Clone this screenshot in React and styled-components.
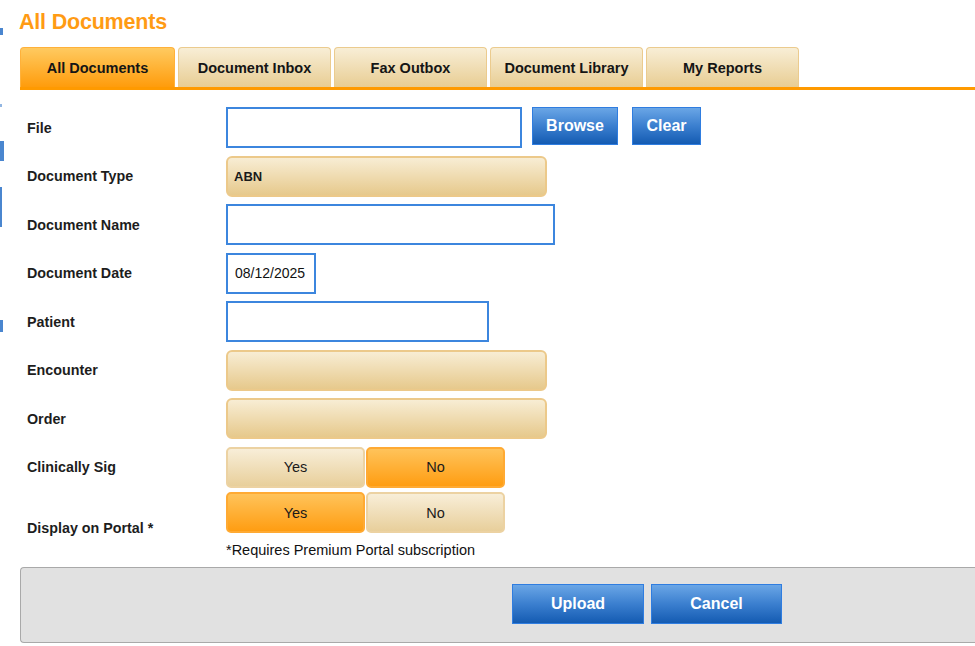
import React, { useState } from 'react';
import styled, { createGlobalStyle } from "styled-components";

const GlobalStyle = createGlobalStyle`
  body {
    margin: 0;
    background: #fff;
    font-family: "Liberation Sans", Arial, sans-serif;
    overflow: hidden;
  }
`;

const Page = styled.div`
  display: flex;
  width: 975px;
  height: 646px;
  overflow: hidden;
`;

const SideStrip = styled.div`
  width: 5px;
  display: flex;
  flex-direction: column;
  flex-shrink: 0;
`;

const Mark = styled.div`
  margin-top: ${p => p.$gap}px;
  height: ${p => p.$h}px;
  width: ${p => p.$w}px;
  background: #4a86cf;
  opacity: ${p => p.$o || 1};
`;

const Main = styled.div`
  flex: 1;
  padding-left: 15px;
  min-width: 0;
`;

const Title = styled.h1`
  margin: 0 0 0 -1px;
  padding-top: 10px;
  height: 36px;
  box-sizing: border-box;
  font-size: 21.5px;
  font-weight: bold;
  color: #ff9b14;
  letter-spacing: -0.2px;
`;

const TabBar = styled.div`
  display: flex;
  gap: 3px;
  margin-top: 11px;
  border-bottom: 3px solid #ff9a00;
`;

const Tab = styled.div`
  width: ${p => (p.$wide ? 155 : 153)}px;
  height: 40px;
  box-sizing: border-box;
  display: flex;
  align-items: center;
  justify-content: center;
  font-size: 14.5px;
  font-weight: bold;
  color: #151515;
  border: 1px solid ${p => (p.$active ? "#ffb13a" : "#ebcb8e")};
  border-bottom: none;
  border-radius: 4px 4px 0 0;
  background: ${p =>
    p.$active
      ? "linear-gradient(#ffca60, #ff9c0c)"
      : "linear-gradient(#f8eed6, #e8cd93)"};
  cursor: pointer;
`;

const Form = styled.div`
  display: grid;
  grid-template-columns: 199px 1fr;
  row-gap: 7.5px;
  padding: 17px 0 0 7px;
  align-items: center;
`;

const Label = styled.div`
  font-size: 14.3px;
  font-weight: bold;
  color: #1d1d1d;
  margin-top: ${p => p.$mt || 0}px;
`;

const Field = styled.div`
  display: flex;
  align-items: flex-start;
`;

const FieldStack = styled.div`
  display: flex;
  flex-direction: column;
  margin-top: -3px;
`;

const TextInput = styled.input`
  width: ${p => p.$w}px;
  height: 41px;
  box-sizing: border-box;
  border: 2px solid #3c86de;
  padding: 0 7px;
  font-family: "Liberation Sans", Arial, sans-serif;
  font-size: 14px;
  color: #111;
  outline: none;
`;

const Select = styled.div`
  width: 321px;
  height: 41px;
  box-sizing: border-box;
  border: 2px solid #ecc98a;
  border-radius: 6px;
  background: linear-gradient(#f8edd4, #e6c98c);
  padding: 0 6px;
  display: flex;
  align-items: center;
  font-size: 13px;
  font-weight: bold;
  color: #1a1a1a;
`;

const BlueButton = styled.button`
  width: ${p => p.$w}px;
  height: ${p => p.$h || 38}px;
  margin-left: ${p => p.$ml || 0}px;
  border: 1px solid #2f7de0;
  background: linear-gradient(#6aa6e6, #3b7fcf 50%, #145bb2);
  color: #fff;
  font-family: "Liberation Sans", Arial, sans-serif;
  font-size: 16px;
  font-weight: bold;
  cursor: pointer;
  padding: 0;
`;

const Toggle = styled.div`
  display: flex;
  gap: 1px;
`;

const ToggleButton = styled.button`
  width: 139px;
  height: 41px;
  box-sizing: border-box;
  border: 2px solid ${p => (p.$on ? "#ffaa33" : "#ecd2a2")};
  border-radius: 5px;
  background: ${p =>
    p.$on
      ? "linear-gradient(#ffc35a, #ff9d12)"
      : "linear-gradient(#f8eed8, #e8cf9b)"};
  font-family: "Liberation Sans", Arial, sans-serif;
  font-size: 14.5px;
  color: #1a1a1a;
  cursor: pointer;
  padding: 0;
`;

const Note = styled.div`
  font-size: 14.5px;
  color: #111;
  margin-top: 9px;
`;

const Footer = styled.div`
  margin-top: 9px;
  height: 76px;
  box-sizing: border-box;
  background: #e1e1e1;
  border: 1px solid #a9a9a9;
  border-right: none;
  border-radius: 4px 0 0 4px;
  display: flex;
  align-items: center;
  gap: 7px;
  padding: 0 0 2px 491px;
`;

const YesNo = ({ value, onChange }) => (
  <Toggle>
    <ToggleButton $on={value === "yes"} onClick={() => onChange("yes")}>Yes</ToggleButton>
    <ToggleButton $on={value === "no"} onClick={() => onChange("no")}>No</ToggleButton>
  </Toggle>
);

const tabs = ["All Documents", "Document Inbox", "Fax Outbox", "Document Library", "My Reports"];

const App = () => {
  const [activeTab, setActiveTab] = useState(0);
  const [clinical, setClinical] = useState("no");
  const [portal, setPortal] = useState("yes");

  return (
    <Page>
      <GlobalStyle />
      <SideStrip>
        <Mark $gap={28} $h={7} $w={3} />
        <Mark $gap={69} $h={3} $w={2} $o={0.6} />
        <Mark $gap={34} $h={20} $w={4} />
        <Mark $gap={26} $h={40} $w={2} />
        <Mark $gap={93} $h={12} $w={3} />
      </SideStrip>
      <Main>
        <Title>All Documents</Title>
        <TabBar>
          {tabs.map((t, i) => (
            <Tab key={t} $wide={i === 0} $active={i === activeTab} onClick={() => setActiveTab(i)}>{t}</Tab>
          ))}
        </TabBar>

        <Form>
          <Label>File</Label>
          <Field>
            <TextInput $w={296} />
            <BlueButton $w={86} $ml={10}>Browse</BlueButton>
            <BlueButton $w={69} $ml={14}>Clear</BlueButton>
          </Field>

          <Label>Document Type</Label>
          <Field><Select>ABN</Select></Field>

          <Label>Document Name</Label>
          <Field><TextInput $w={329} /></Field>

          <Label>Document Date</Label>
          <Field><TextInput $w={90} defaultValue="08/12/2025" /></Field>

          <Label>Patient</Label>
          <Field><TextInput $w={263} /></Field>

          <Label>Encounter</Label>
          <Field><Select /></Field>

          <Label>Order</Label>
          <Field><Select /></Field>

          <Label>Clinically Sig</Label>
          <Field><YesNo value={clinical} onChange={setClinical} /></Field>

          <Label $mt={3}>Display on Portal *</Label>
          <FieldStack>
            <YesNo value={portal} onChange={setPortal} />
            <Note>*Requires Premium Portal subscription</Note>
          </FieldStack>
        </Form>

        <Footer>
          <BlueButton $w={132} $h={40}>Upload</BlueButton>
          <BlueButton $w={131} $h={40}>Cancel</BlueButton>
        </Footer>
      </Main>
    </Page>
  );
};

export default App;
